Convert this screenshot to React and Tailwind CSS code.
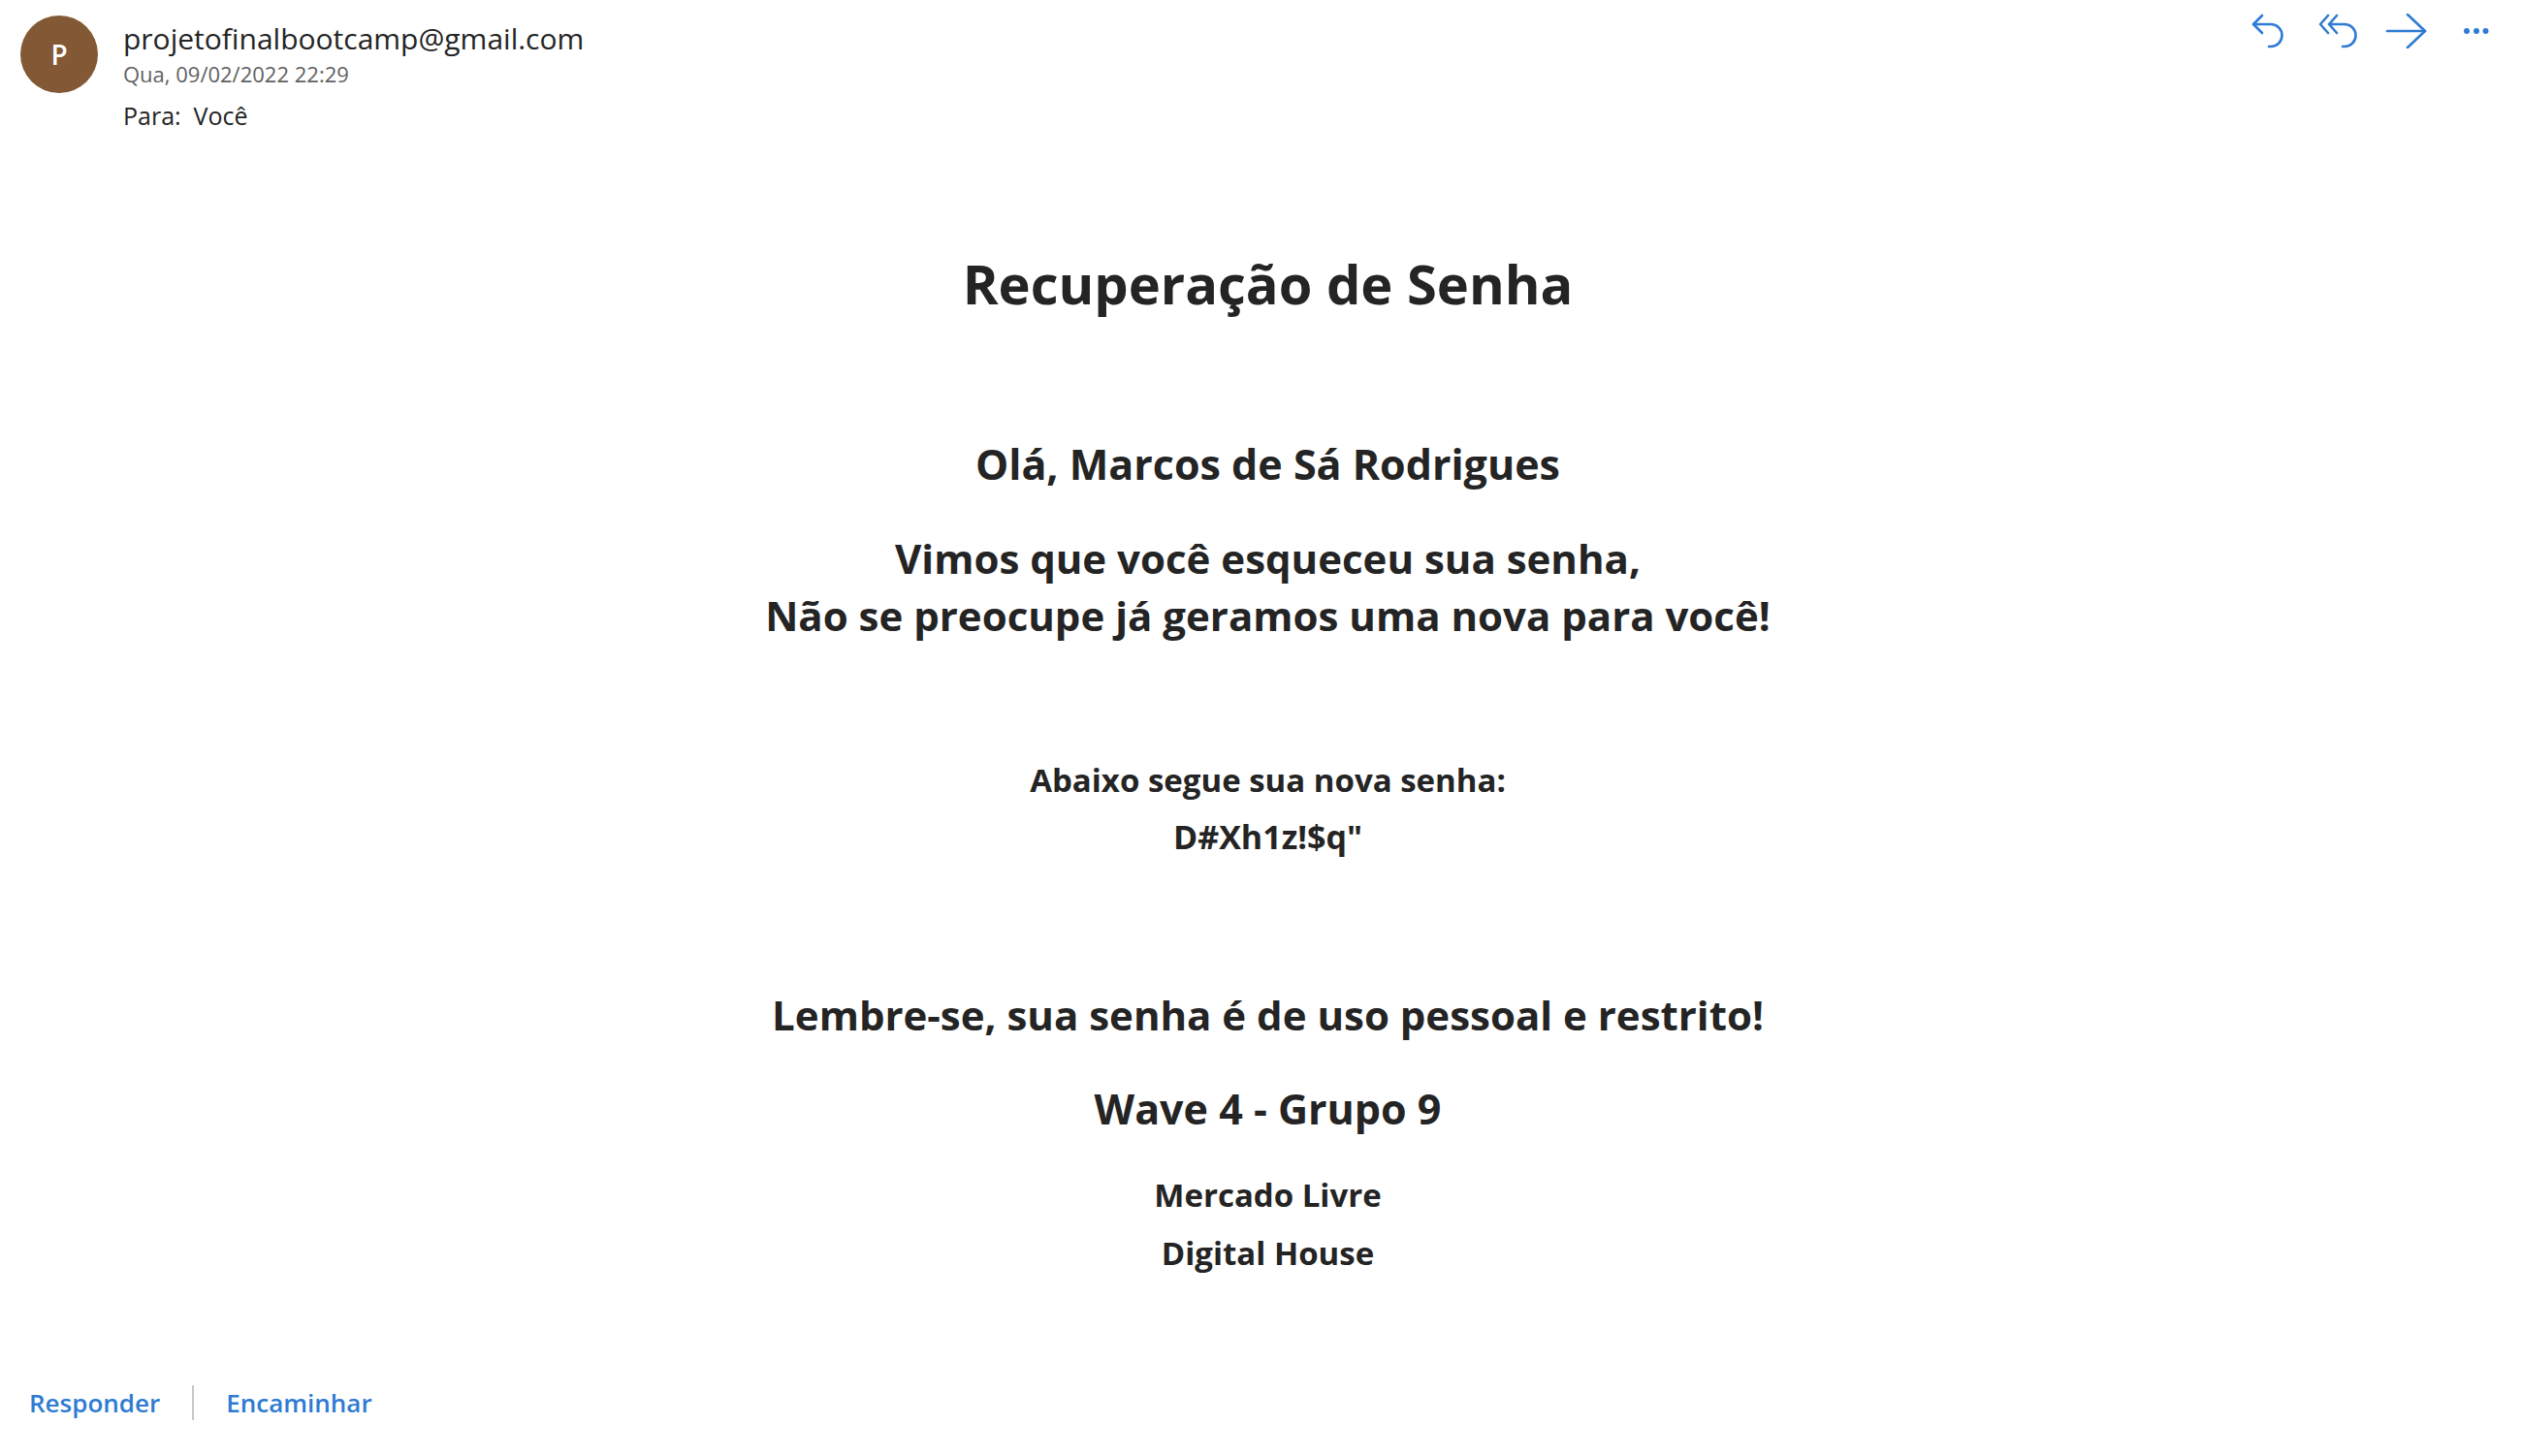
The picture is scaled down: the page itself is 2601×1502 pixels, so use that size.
const font = { fontFamily: '"Open Sans", "Noto Sans", sans-serif' }

function ReplyIcon() {
  return (
    <svg width="34" height="36" viewBox="0 0 34 36" fill="none" stroke="#2f7bd3" strokeWidth="2.6" strokeLinecap="round" strokeLinejoin="round">
      <path d="M11 2 L2 11 L11 20" />
      <path d="M2 11 H20 A11.5 11.5 0 0 1 20 34 H18" />
    </svg>
  )
}

function ReplyAllIcon() {
  return (
    <svg width="41" height="36" viewBox="0 0 41 36" fill="none" stroke="#2f7bd3" strokeWidth="2.6" strokeLinecap="round" strokeLinejoin="round">
      <path d="M10 2 L2 11 L10 20" />
      <path d="M19 2 L11 11 L19 20" />
      <path d="M11 11 H27 A11.5 11.5 0 0 1 27 34 H25" />
    </svg>
  )
}

function ForwardIcon() {
  return (
    <svg width="44" height="36" viewBox="0 0 44 36" fill="none" stroke="#2f7bd3" strokeWidth="2.6" strokeLinecap="round" strokeLinejoin="round">
      <path d="M2 18 H41" />
      <path d="M23 1 L41 18 L23 35" />
    </svg>
  )
}

function MoreIcon() {
  return (
    <svg width="32" height="36" viewBox="0 0 32 36" fill="#2f7bd3">
      <circle cx="6" cy="18" r="3" />
      <circle cx="16" cy="18" r="3" />
      <circle cx="25.5" cy="18" r="3" />
    </svg>
  )
}

export default function App() {
  return (
    <div className="min-h-screen w-full bg-white text-[#242424]" style={font}>
      {/* header */}
      <div className="flex h-[140px] justify-between">
        <div className="flex pl-[21px] pt-[16px]">
          <div className="flex h-[80px] w-[80px] items-center justify-center rounded-full bg-[#835834] text-[28px] font-semibold text-white">
            P
          </div>
          <div className="ml-[26px] flex flex-col">
            <span className="mt-[5px] text-[30px] leading-[38px]">projetofinalbootcamp@gmail.com</span>
            <span className="mt-[3px] text-[22px] leading-[28px] text-[#616161]">Qua, 09/02/2022 22:29</span>
            <span className="mt-[12px] text-[25px] leading-[34px]">Para:&nbsp; Você</span>
          </div>
        </div>
        <div className="flex items-start pr-[31px] pt-[14px]">
          <ReplyIcon />
          <div className="ml-[35px]"><ReplyAllIcon /></div>
          <div className="ml-[28px]"><ForwardIcon /></div>
          <div className="ml-[34px]"><MoreIcon /></div>
        </div>
      </div>

      {/* message body */}
      <div className="flex flex-col items-center pl-[14px] text-center font-bold">
        <h1 className="mt-[112px] text-[56px] leading-[80px]">Recuperação de Senha</h1>
        <h2 className="mt-[117px] text-[43px] leading-[60px]">Olá, Marcos de Sá Rodrigues</h2>
        <h2 className="mt-[37px] text-[42px] leading-[59px]">
          Vimos que você esqueceu sua senha,
          <br />
          Não se preocupe já geramos uma nova para você!
        </h2>
        <h3 className="mt-[112px] text-[33px] leading-[58px]">Abaixo segue sua nova senha:</h3>
        <h3 className="text-[34px] leading-[58px]">D#Xh1z!$q"</h3>
        <h2 className="mt-[125px] text-[42px] leading-[60px]">Lembre-se, sua senha é de uso pessoal e restrito!</h2>
        <h2 className="mt-[37px] text-[43px] leading-[60px]">Wave 4 - Grupo 9</h2>
        <h3 className="mt-[29px] text-[33px] leading-[60px]">Mercado Livre</h3>
        <h3 className="text-[33px] leading-[60px]">Digital House</h3>
      </div>

      {/* footer actions */}
      <div className="mt-[104px] flex h-[40px] items-center pl-[30px] text-[26px] font-semibold text-[#2f7bd3]">
        <a href="#">Responder</a>
        <span className="mx-[33px] h-[36px] w-[2px] bg-[#c8c8c8]" />
        <a href="#">Encaminhar</a>
      </div>
    </div>
  )
}
